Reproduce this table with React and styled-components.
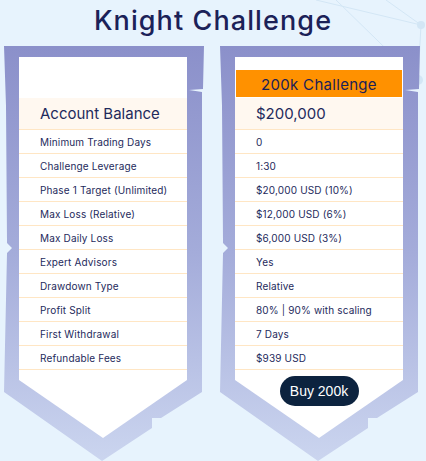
import React from 'react';
import styled, { createGlobalStyle } from 'styled-components';

const GlobalStyle = createGlobalStyle`
  body {
    margin: 0;
    background: #e7f3fd;
    font-family: Inter, "Open Sans", sans-serif;
  }
`

const Page = styled.div`
  position: relative;
  width: 426px;
  height: 461px;
  overflow: hidden;
`

const Decor = styled.svg`
  position: absolute;
  top: 0;
  right: 0;
  pointer-events: none;
`

const Title = styled.h1`
  position: relative;
  margin: 0;
  padding-top: 4px;
  height: 42px;
  text-align: center;
  font-size: 27px;
  font-weight: 500;
  line-height: 34px;
  color: #1b2158;
  letter-spacing: 1.1px;
`

const Cards = styled.div`
  position: relative;
  display: flex;
  gap: 16px;
  padding-left: 4px;
`

const Shield = styled.div`
  width: 200px;
  height: 415px;
  box-sizing: border-box;
  padding: 11px 0 0 15px;
  background: linear-gradient(180deg, #8b90ca 0%, #a4acda 50%, #cbd5ef 100%);
  clip-path: polygon(
    0 0, 200px 0, 199px 43px, 185px 44px, 198px 46px, 198px 346px,
    157px 372px, 148px 372px, 148px 382px, 98px 415px, 0 346px,
    3px 207px, 8px 202px, 3px 197px, 2px 60px
  );
`

const Panel = styled.div`
  width: 168px;
  height: 381px;
  background: #fff;
  display: flex;
  flex-direction: column;
  clip-path: polygon(0 0, 100% 0, 100% 323px, 50% 381px, 0 323px);
`

const Head = styled.div`
  height: 41px;
  box-sizing: border-box;
  padding: 13px 1px 0 1px;
`

const Badge = styled.div`
  height: 27px;
  background: #ff9100;
  color: #1b2158;
  font-size: 15px;
  line-height: 29px;
  text-align: center;
  letter-spacing: 0.3px;
`

const Balance = styled.div`
  height: 32px;
  box-sizing: border-box;
  padding-left: 21px;
  background: #fff8f0;
  border-bottom: 1px solid #ffe6c4;
  display: flex;
  align-items: center;
  font-size: 15px;
  color: #1e2a5c;
`

const Row = styled.div`
  height: 24px;
  box-sizing: border-box;
  padding-left: 21px;
  border-bottom: 1px solid #ffe6c4;
  display: flex;
  align-items: center;
  font-size: 10px;
  letter-spacing: 0.15px;
  color: #1e2a5c;
  white-space: nowrap;
`

const Button = styled.button`
  align-self: center;
  margin-top: 6px;
  width: 79px;
  height: 30px;
  border: none;
  border-radius: 15px;
  background: #0c233f;
  color: #fff;
  font-family: "Liberation Sans", Arial, sans-serif;
  font-size: 14px;
  padding: 0;
`

const labels = [
  'Minimum Trading Days',
  'Challenge Leverage',
  'Phase 1 Target (Unlimited)',
  'Max Loss (Relative)',
  'Max Daily Loss',
  'Expert Advisors',
  'Drawdown Type',
  'Profit Split',
  'First Withdrawal',
  'Refundable Fees',
]

const values = [
  '0',
  '1:30',
  '$20,000 USD (10%)',
  '$12,000 USD (6%)',
  '$6,000 USD (3%)',
  'Yes',
  'Relative',
  '80% | 90% with scaling',
  '7 Days',
  '$939 USD',
]

const App = () => (
  <Page>
    <GlobalStyle />
    <Decor width="140" height="120" viewBox="0 0 140 120">
      <g stroke="#d3e6f5" strokeWidth="1" fill="none">
        <line x1="30" y1="0" x2="135" y2="25" />
        <line x1="50" y1="0" x2="132" y2="80" />
        <line x1="135" y1="25" x2="132" y2="80" />
        <line x1="100" y1="0" x2="135" y2="25" />
        <line x1="132" y1="80" x2="90" y2="120" />
      </g>
      <circle cx="135" cy="25" r="4" fill="#d3e6f5" />
      <circle cx="132" cy="80" r="5" fill="#d3e6f5" />
    </Decor>
    <Title>Knight Challenge</Title>
    <Cards>
      <Shield>
        <Panel>
          <Head />
          <Balance>Account Balance</Balance>
          {labels.map((l) => <Row key={l}>{l}</Row>)}
        </Panel>
      </Shield>
      <Shield>
        <Panel>
          <Head><Badge>200k Challenge</Badge></Head>
          <Balance>$200,000</Balance>
          {values.map((v, i) => <Row key={i}>{v}</Row>)}
          <Button>Buy 200k</Button>
        </Panel>
      </Shield>
    </Cards>
  </Page>
)

export default App
